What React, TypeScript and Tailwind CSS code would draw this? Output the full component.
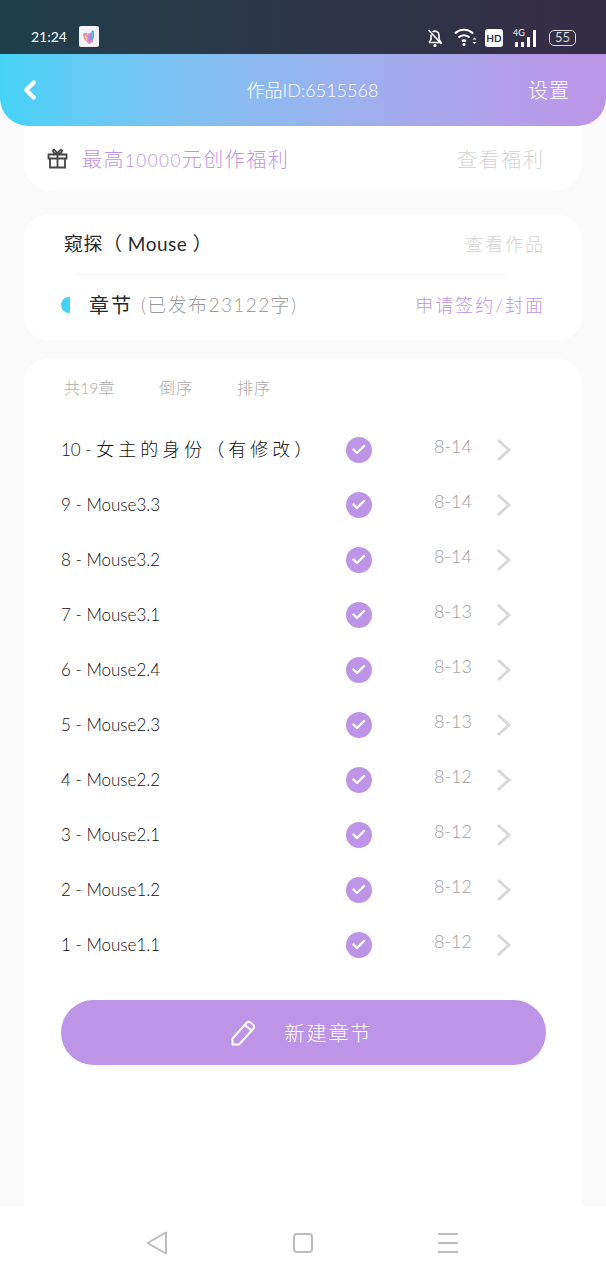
import { ChevronLeft } from 'lucide-react'

const chapters = [
  { title: '10 - ', note: '女主的身份（有修改）', date: '8-14' },
  { title: '9 - Mouse3.3', date: '8-14' },
  { title: '8 - Mouse3.2', date: '8-14' },
  { title: '7 - Mouse3.1', date: '8-13' },
  { title: '6 - Mouse2.4', date: '8-13' },
  { title: '5 - Mouse2.3', date: '8-13' },
  { title: '4 - Mouse2.2', date: '8-12' },
  { title: '3 - Mouse2.1', date: '8-12' },
  { title: '2 - Mouse1.2', date: '8-12' },
  { title: '1 - Mouse1.1', date: '8-12' },
]

function StatusBar() {
  return (
    <div className="flex h-[54px] shrink-0 items-end justify-between bg-gradient-to-r from-[#1f3f4a] to-[#352c45] pb-[7px] pl-[31px] pr-[30px] text-white">
      <div className="flex items-center gap-[14px]">
        <span className="w-[34px] text-[14px] leading-[20px]">21:24</span>
        <svg width="20" height="21" viewBox="0 0 20 21">
          <rect width="20" height="21" rx="2" fill="#f4f1f6" />
          <path d="M4 8c2-2 4-1 5 0 2-2 5-2 6 0l-1 8-4 2-5-5z" fill="#e58ac6" />
          <path d="M8 15l-3-5 4 1z" fill="#f2c46d" />
          <path d="M13 4l2 1v7l-4 3 1-6z" fill="#53b9d8" />
          <path d="M9 11l3-3 1 4-3 4z" fill="#a98ae0" />
        </svg>
      </div>
      <div className="flex items-center">
        {/* silent bell */}
        <svg width="16" height="19" viewBox="0 0 16 19" fill="none" stroke="#fff" strokeWidth="1.6" className="mr-[11px]">
          <path d="M2 14.500h12l-2-3V7a4 4 0 0 0-6.500-3M4 6.500v5l-2 3" />
          <path d="M1.500 2l13 14" />
          <circle cx="8" cy="17.500" r="0.800" fill="#fff" />
        </svg>
        {/* wifi */}
        <svg width="23" height="19" viewBox="0 0 23 19" fill="none" stroke="#fff" strokeWidth="2.200" className="mr-[8px]">
          <path d="M1 5.500c5-5 13-5 18 0" />
          <path d="M4.500 9.500c3-3 8-3 11 0" />
          <path d="M8 13c1.500-1 2.500-1 4 0" />
          <circle cx="10" cy="16.500" r="1.500" fill="#fff" stroke="none" />
          <path d="M18.500 11.500l2-2 2 2zM18.500 14l2 2 2-2z" fill="#fff" stroke="none" />
        </svg>
        <div className="mr-[10px] flex h-[18px] w-[18px] items-center justify-center rounded-[3px] bg-white text-[10px] font-bold leading-none text-[#2f2e45]">
          HD
        </div>
        <div className="relative mr-[12px] h-[18px] w-[24px]">
          <span className="absolute -top-[1px] left-0 text-[9px] leading-[10px]">4G</span>
          <div className="absolute bottom-0 left-[2px] flex items-end gap-[3px]">
            <div className="h-[5px] w-[3px] bg-white" />
            <div className="h-[5px] w-[3px] bg-white" />
            <div className="h-[10px] w-[3px] bg-white" />
            <div className="h-[17px] w-[3px] bg-white" />
          </div>
        </div>
        <div className="flex h-[16px] w-[27px] items-center justify-center rounded-[5px] border border-[#d8d8dc] text-[13px] leading-none text-[#d8d8dc]">
          55
        </div>
      </div>
    </div>
  )
}

function Header() {
  return (
    <div className="relative z-10 flex h-[72px] shrink-0 items-center justify-between rounded-b-[28px] bg-gradient-to-r from-[#44d3f8] to-[#bd94e6] pl-[15px] pr-[36px] text-white">
      <ChevronLeft size={30} strokeWidth={3.5} className="text-white" />
      <span className="ml-[52px] text-[18px] font-light">作品ID:6515568</span>
      <span className="text-[20px] font-light tracking-[1px]">设置</span>
    </div>
  )
}

function ChapterRow({ title, note, date }: { title: string; note?: string; date: string }) {
  return (
    <div className="flex h-[55px] items-center pl-[37px]">
      <span className="w-[285px] truncate whitespace-pre text-[17px] font-light text-[#111111]">
        {title}
        {note && <span className="text-[18px] tracking-[4px]">{note}</span>}
      </span>
      <div className="flex h-[26px] w-[26px] items-center justify-center rounded-full bg-[#bd94e6]">
        <svg width="14" height="11" viewBox="0 0 14 11" fill="none" stroke="#fff" strokeWidth="2.400" strokeLinecap="round" strokeLinejoin="round">
          <path d="M1.500 5.500l3.500 3.500 7-7" />
        </svg>
      </div>
      <span className="-mt-[6px] ml-[62px] w-[62px] text-[18px] font-light text-[#a0a0a0]">{date}</span>
      <svg width="16" height="24" viewBox="0 0 16 24" fill="none" stroke="#d8d8d8" strokeWidth="3">
        <path d="M2 2l11 10L2 22" />
      </svg>
    </div>
  )
}

export default function App() {
  return (
    <div className="flex h-[1280px] w-[606px] flex-col overflow-hidden bg-[#fafafa] font-['Lato','Noto_Sans_CJK_SC',sans-serif]">
      <StatusBar />
      <Header />

      <main className="flex min-h-0 flex-1 flex-col px-[24px]">
        <section className="-mt-[28px] flex h-[93px] shrink-0 items-center justify-between rounded-b-[28px] bg-white pl-[23px] pr-[37px] pt-[28px]">
          <div className="flex items-center gap-[14px]">
            <svg width="21" height="21" viewBox="0 0 21 21" fill="none" stroke="#444" strokeWidth="1.800">
              <path d="M1.500 6.500h18v4h-18zM3 10.500v9h15v-9M10.500 6.500v13M10.500 6.500C8 6 5.500 4.500 6 2.500 7 1 9.500 3 10.500 6.500 11.500 3 14 1 15 2.500 15.500 4.500 13 6 10.500 6.500z" />
            </svg>
            <span className="text-[20px] font-light tracking-[1.500px] text-[#bd94e6]">
              最高<span className="text-[17px]">10000</span>元创作福利
            </span>
          </div>
          <span className="text-[20px] font-light tracking-[2px] text-[#d4d4d4]">查看福利</span>
        </section>

        <section className="mt-[24px] flex h-[125px] shrink-0 flex-col rounded-[24px] bg-white">
          <div className="flex h-[59px] items-center justify-between pl-[40px] pr-[37px]">
            <span className="text-[19px] tracking-[0.500px] text-[#2a2a2a]">窥探（ Mouse ）</span>
            <span className="text-[18px] font-light tracking-[2px] text-[#d4d4d4]">查看作品</span>
          </div>
          <div className="ml-[50px] mr-[76px] h-px bg-[#f6f6f6]" />
          <div className="flex h-[60px] items-center justify-between pr-[37px]">
            <div className="flex items-center">
              <div className="ml-[37px] h-[16px] w-[9px] rounded-l-full bg-[#44d3f8]" />
              <span className="ml-[19px] text-[20px] tracking-[2px] text-[#2a2a2a]">章节</span>
              <span className="ml-[8px] text-[19px] font-light tracking-[1.400px] text-[#9a9a9a]">(已发布23122字)</span>
            </div>
            <span className="text-[18px] font-light tracking-[2px] text-[#bd94e6]">申请签约/封面</span>
          </div>
        </section>

        <section className="mt-[19px] flex min-h-0 flex-1 flex-col rounded-t-[24px] bg-white">
          <div className="flex h-[57px] shrink-0 items-center pl-[40px] text-[16px] font-light text-[#ababab]">
            <span className="w-[95px]">共19章</span>
            <span className="w-[78px] tracking-[1px]">倒序</span>
            <span className="tracking-[1px]">排序</span>
          </div>
          <div className="shrink-0 pt-[6px]">
            {chapters.map((c) => (
              <ChapterRow key={c.title} title={c.title} note={c.note} date={c.date} />
            ))}
          </div>
          <button className="ml-[37px] mt-[28px] flex h-[65px] w-[485px] shrink-0 items-center justify-center gap-[28px] rounded-full bg-[#bd94e6] pr-[4px] text-white">
            <svg width="26" height="26" viewBox="0 0 26 26" fill="none" stroke="#fff" strokeWidth="2" strokeLinejoin="round">
              <path d="M1.500 24.500v-6L15.500 3a3 3 0 0 1 4-.500l2.500 2a3 3 0 0 1 .500 4L8 24.500z" />
              <path d="M14 5l7 6" />
            </svg>
            <span className="text-[20px] font-light tracking-[2px]">新建章节</span>
          </button>
        </section>
      </main>

      <nav className="flex h-[74px] shrink-0 items-center bg-white pb-[1px]">
        <svg width="22" height="24" viewBox="0 0 22 24" fill="none" stroke="#bcbcbc" strokeWidth="2" strokeLinejoin="round" className="ml-[146px]">
          <path d="M20 1.500v21L1.500 12z" />
        </svg>
        <div className="ml-[125px] h-[20px] w-[20px] rounded-[4px] border-2 border-[#bcbcbc]" />
        <div className="ml-[125px] flex h-[20px] w-[20px] flex-col justify-between">
          <div className="h-[2px] bg-[#bcbcbc]" />
          <div className="h-[2px] bg-[#bcbcbc]" />
          <div className="h-[2px] bg-[#bcbcbc]" />
        </div>
      </nav>
    </div>
  )
}
